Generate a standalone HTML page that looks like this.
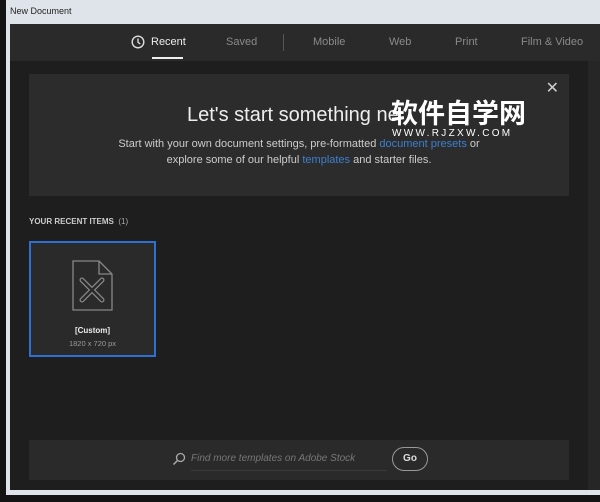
<!DOCTYPE html>
<html><head><style>
*{margin:0;padding:0;box-sizing:border-box}
body{width:600px;height:502px;background:#141414;position:relative;overflow:hidden;font-family:"Liberation Sans",sans-serif}
.frame{position:absolute;left:6px;top:0;width:600px;height:495px;background:#dfe4ea}
.title{position:absolute;left:10px;top:6px;font-size:9px;color:#222}
.inner{position:absolute;left:10px;top:24px;width:590px;height:466px;background:#1e1e1e}
.tabs{position:absolute;left:0;top:0;width:590px;height:37px;background:#2a2a2a}
.tab{position:absolute;top:12px;font-size:11px;color:#8a8a8a}
.scroll{position:absolute;right:0;top:37px;width:12px;height:429px;background:#262626}
.banner{position:absolute;left:19px;top:50px;width:540px;height:122px;background:#2c2c2c}
.card{position:absolute;left:19px;top:217px;width:127px;height:116px;background:#2a2a2a;border:2px solid #2e6fd1}
.search{position:absolute;left:19px;top:416px;width:540px;height:40px;background:#2a2a2a}
</style></head><body>
<div class="frame"></div>
<div class="title">New Document</div>
<div class="inner">
 <div class="tabs">
  <svg style="position:absolute;left:121px;top:11px" width="14" height="14" viewBox="0 0 14 14"><circle cx="7" cy="7" r="5.8" fill="none" stroke="#ddd" stroke-width="1.4"/><path d="M7 3.5V7.3L9.2 9" fill="none" stroke="#ddd" stroke-width="1.4"/></svg>
  <div class="tab" style="left:141px;color:#eee">Recent</div>
  <div style="position:absolute;left:142px;top:33px;width:31px;height:2px;background:#eee"></div>
  <div class="tab" style="left:216px">Saved</div>
  <div style="position:absolute;left:273px;top:10px;width:1px;height:17px;background:#555"></div>
  <div class="tab" style="left:303px">Mobile</div>
  <div class="tab" style="left:379px">Web</div>
  <div class="tab" style="left:445px">Print</div>
  <div class="tab" style="left:511px">Film &amp; Video</div>
 </div>
 <div class="scroll"></div>
 <div class="banner">
  <div style="position:absolute;right:10px;top:4px;color:#ccc;font-size:16px">✕</div>
  <div style="position:absolute;left:158px;top:30px;font-size:20px;color:#eee">Let's start something ne</div>
  <div style="position:absolute;left:362px;top:22px;font-family:'Noto Sans CJK SC',sans-serif;font-size:27px;font-weight:bold;color:#fff;line-height:32px">软件自学网</div>
  <div style="position:absolute;left:363px;top:54px;font-size:10px;color:#fff;letter-spacing:2.3px">WWW.RJZXW.COM</div>
  <div style="position:absolute;left:0;width:540px;top:62px;text-align:center;font-size:11px;color:#ccc;line-height:16px">Start with your own document settings, pre-formatted <span style="color:#3d7fd0">document presets</span> or<br>explore some of our helpful <span style="color:#3d7fd0">templates</span> and starter files.</div>
 </div>
 <div style="position:absolute;left:19px;top:193px;font-size:8px;color:#ccc;font-weight:bold">YOUR RECENT ITEMS <span style="font-weight:normal;color:#aaa">&nbsp;(1)</span></div>
 <div class="card">
  <svg style="position:absolute;left:41px;top:17px" width="42" height="52" viewBox="0 0 42 52"><path d="M1 1H27L40 14V50H1Z M27 1V14H40" fill="none" stroke="#888" stroke-width="1.3"/><path d="M10 20L30 40M30 20L10 40" stroke="#888" stroke-width="5" stroke-linecap="round"/><path d="M10 20L30 40M30 20L10 40" stroke="#2a2a2a" stroke-width="2.6" stroke-linecap="round"/></svg>
  <div style="position:absolute;left:0;width:123px;top:83px;text-align:center;font-size:8px;color:#eee;font-weight:bold">[Custom]</div>
  <div style="position:absolute;left:0;width:123px;top:96px;text-align:center;font-size:7.5px;color:#999">1820 x 720 px</div>
 </div>
 <div class="search">
  <svg style="position:absolute;left:143px;top:12px" width="14" height="14" viewBox="0 0 14 14"><circle cx="8.5" cy="5.5" r="4" fill="none" stroke="#aaa" stroke-width="1.3"/><path d="M5.5 8.5L1.5 12.5" stroke="#aaa" stroke-width="1.5"/></svg>
  <div style="position:absolute;left:162px;top:13px;font-size:10px;color:#777;font-style:italic">Find more templates on Adobe Stock</div>
  <div style="position:absolute;left:162px;top:30px;width:196px;height:1px;background:#3a3a3a"></div>
  <div style="position:absolute;left:363px;top:7px;width:36px;height:24px;border:1.5px solid #999;border-radius:12px;color:#ddd;font-size:10px;font-weight:bold;text-align:center;line-height:21px">Go</div>
 </div>
</div>
</body></html>
